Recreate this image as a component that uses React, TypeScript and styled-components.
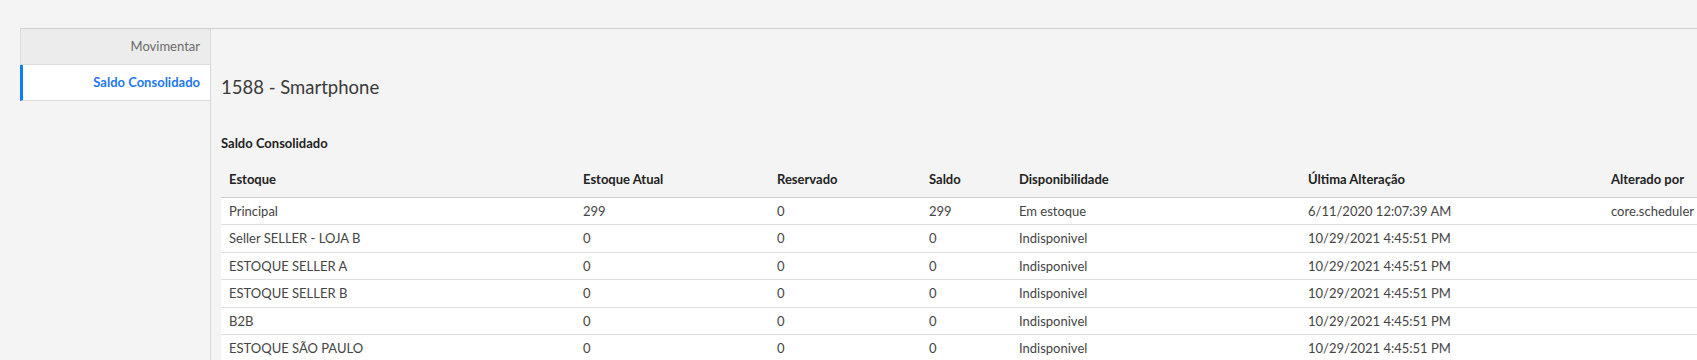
import styled, { createGlobalStyle } from 'styled-components';

const GlobalStyle = createGlobalStyle`
  html, body {
    margin: 0;
    padding: 0;
    overflow: hidden;
    background: #f4f4f4;
  }

  body {
    font-family: Lato, 'Noto Sans', sans-serif;
    font-size: 13px;
    color: #333;
  }
`;

interface IStock {
  estoque: string;
  atual: number;
  reservado: number;
  saldo: number;
  disponibilidade: string;
  alteracao: string;
  alteradoPor: string;
}

const stocks: IStock[] = [
  { estoque: 'Principal', atual: 299, reservado: 0, saldo: 299, disponibilidade: 'Em estoque', alteracao: '6/11/2020 12:07:39 AM', alteradoPor: 'core.scheduler' },
  { estoque: 'Seller SELLER - LOJA B', atual: 0, reservado: 0, saldo: 0, disponibilidade: 'Indisponivel', alteracao: '10/29/2021 4:45:51 PM', alteradoPor: '' },
  { estoque: 'ESTOQUE SELLER A', atual: 0, reservado: 0, saldo: 0, disponibilidade: 'Indisponivel', alteracao: '10/29/2021 4:45:51 PM', alteradoPor: '' },
  { estoque: 'ESTOQUE SELLER B', atual: 0, reservado: 0, saldo: 0, disponibilidade: 'Indisponivel', alteracao: '10/29/2021 4:45:51 PM', alteradoPor: '' },
  { estoque: 'B2B', atual: 0, reservado: 0, saldo: 0, disponibilidade: 'Indisponivel', alteracao: '10/29/2021 4:45:51 PM', alteradoPor: '' },
  { estoque: 'ESTOQUE SÃO PAULO', atual: 0, reservado: 0, saldo: 0, disponibilidade: 'Indisponivel', alteracao: '10/29/2021 4:45:51 PM', alteradoPor: '' },
];

const columns = [
  { label: 'Estoque', width: 354 },
  { label: 'Estoque Atual', width: 194 },
  { label: 'Reservado', width: 152 },
  { label: 'Saldo', width: 90 },
  { label: 'Disponibilidade', width: 289 },
  { label: 'Última Alteração', width: 303 },
  { label: 'Alterado por', width: 140 },
];

const App = () => {
  return (
    <>
      <GlobalStyle />
      <Page>
        <Layout>
          <Sidebar>
            <MenuItem>Movimentar</MenuItem>
            <MenuItem $active>Saldo Consolidado</MenuItem>
          </Sidebar>

          <Content>
            <Title>1588 - Smartphone</Title>
            <SectionTitle>Saldo Consolidado</SectionTitle>

            <Table>
              <colgroup>
                {columns.map((col) => (
                  <col key={col.label} style={{ width: col.width }} />
                ))}
              </colgroup>
              <thead>
                <tr>
                  {columns.map((col) => (
                    <th key={col.label}>{col.label}</th>
                  ))}
                </tr>
              </thead>
              <tbody>
                {stocks.map((item) => (
                  <tr key={item.estoque}>
                    <td>{item.estoque}</td>
                    <td>{item.atual}</td>
                    <td>{item.reservado}</td>
                    <td>{item.saldo}</td>
                    <td>{item.disponibilidade}</td>
                    <td>{item.alteracao}</td>
                    <td>{item.alteradoPor}</td>
                  </tr>
                ))}
              </tbody>
            </Table>
          </Content>
        </Layout>
      </Page>
    </>
  );
};

export default App;

const Page = styled.div`
  padding: 28px 0 0 20px;
  min-height: 360px;
  box-sizing: border-box;
`;

const Layout = styled.div`
  display: flex;
  border-top: 1px solid #cfcfcf;
  min-height: 332px;
`;

const Sidebar = styled.nav`
  flex: 0 0 190px;
  border-right: 1px solid #d9d9d9;
`;

const MenuItem = styled.div<{ $active?: boolean }>`
  height: 35px;
  line-height: 35px;
  padding-right: 10px;
  text-align: right;
  font-size: 13px;
  box-sizing: content-box;
  border-left: ${({ $active }) => ($active ? '3px solid #0a7cff' : '1px solid #dcdcdc')};
  border-bottom: 1px solid #dcdcdc;
  background: ${({ $active }) => ($active ? '#ffffff' : '#ececec')};
  color: ${({ $active }) => ($active ? '#1f77ec' : '#6b6b6b')};
  font-weight: ${({ $active }) => ($active ? 700 : 400)};
`;

const Content = styled.main`
  flex: 1;
  min-width: 0;
  padding: 47px 0 0 10px;
`;

const Title = styled.h1`
  margin: 0;
  font-size: 18.5px;
  line-height: 22px;
  font-weight: 400;
  color: #3a3a3a;
`;

const SectionTitle = styled.h2`
  margin: 36px 0 10px;
  font-size: 13px;
  line-height: 18px;
  font-weight: 700;
  color: #222;
`;

const Table = styled.table`
  border-collapse: collapse;
  table-layout: fixed;
  width: 1522px;

  th,
  td {
    padding: 4px 8px;
    text-align: left;
    line-height: 18.57px;
    white-space: nowrap;
  }

  th {
    padding: 8px;
    font-weight: 700;
    color: #222;
    border-bottom: 1px solid #cfcfcf;
  }

  tbody tr {
    background: #ffffff;
    border-top: 1px solid #dddddd;
  }

  td {
    color: #444;
  }
`;
